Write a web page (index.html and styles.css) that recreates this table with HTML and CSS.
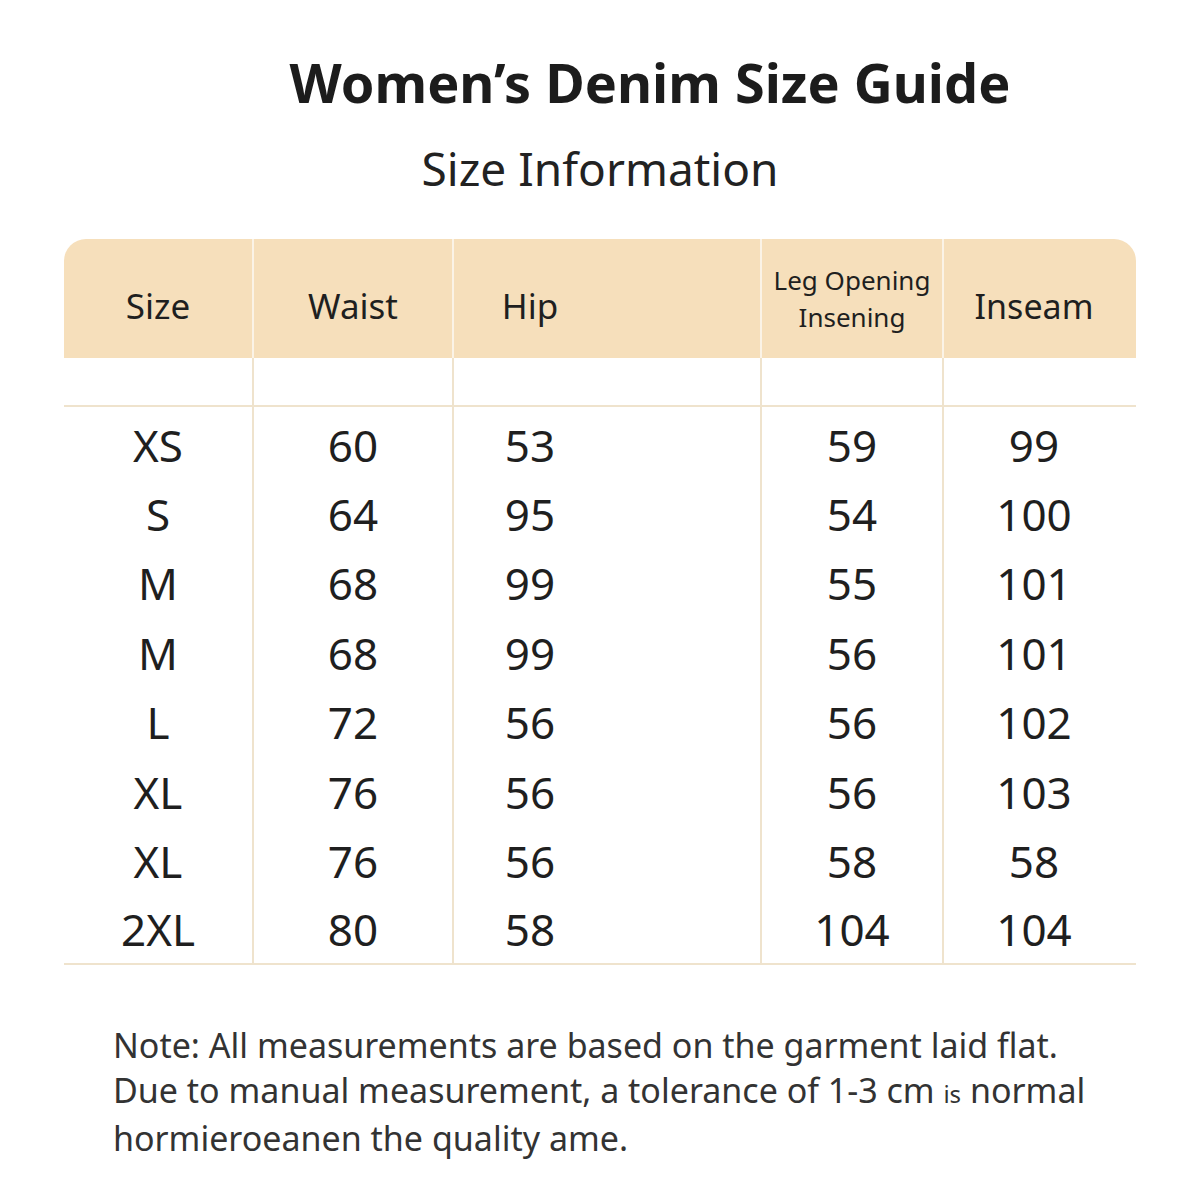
FILE: index.html
```html
<!DOCTYPE html>
<html lang="en">
<head>
<meta charset="utf-8">
<title>Women's Denim Size Guide</title>
<link rel="stylesheet" href="styles.css">
</head>
<body>
<main class="page">
  <h1 class="title">Women’s Denim Size Guide</h1>
  <h2 class="subtitle">Size Information</h2>
  <table class="sizes">
    <thead>
      <tr>
        <th class="c-size">Size</th>
        <th class="c-waist">Waist</th>
        <th class="c-hip">Hip</th>
        <th class="c-leg"><span class="two-line">Leg Opening<br>Insening</span></th>
        <th class="c-inseam">Inseam</th>
      </tr>
    </thead>
    <tbody>
      <tr class="spacer"><td></td><td></td><td></td><td></td><td></td></tr>
      <tr class="first"><td>XS</td><td>60</td><td class="c-hip">53</td><td>59</td><td class="c-inseam">99</td></tr>
      <tr><td>S</td><td>64</td><td class="c-hip">95</td><td>54</td><td class="c-inseam">100</td></tr>
      <tr><td>M</td><td>68</td><td class="c-hip">99</td><td>55</td><td class="c-inseam">101</td></tr>
      <tr><td>M</td><td>68</td><td class="c-hip">99</td><td>56</td><td class="c-inseam">101</td></tr>
      <tr><td>L</td><td>72</td><td class="c-hip">56</td><td>56</td><td class="c-inseam">102</td></tr>
      <tr><td>XL</td><td>76</td><td class="c-hip">56</td><td>56</td><td class="c-inseam">103</td></tr>
      <tr><td>XL</td><td>76</td><td class="c-hip">56</td><td>58</td><td class="c-inseam">58</td></tr>
      <tr class="last"><td>2XL</td><td>80</td><td class="c-hip">58</td><td>104</td><td class="c-inseam">104</td></tr>
    </tbody>
  </table>
  <p class="note">Note: All measurements are based on the garment laid flat.<br>Due to manual measurement, a tolerance of 1-3 cm <span class="tiny">is</span> normal<br>hormieroeanen the quality ame.</p>
</main>
</body>
</html>
```

FILE: styles.css
```css
html, body {
  margin: 0;
  padding: 0;
  background: #ffffff;
}

body {
  font-family: "Noto Sans", "Open Sans", sans-serif;
  color: #1f1f1f;
}

.page {
  width: 1200px;
  padding-top: 50px;
}

.title {
  margin: 0;
  padding-left: 100px;
  font-size: 54px;
  line-height: 64px;
  font-weight: 700;
  text-align: center;
  color: #1c1c1c;
}

.subtitle {
  margin: 26px 0 0;
  font-size: 46px;
  line-height: 56px;
  font-weight: 400;
  text-align: center;
  color: #222;
}

.sizes {
  margin: 43px 0 0 64px;
  width: 1072px;
  border-collapse: separate;
  border-spacing: 0;
  table-layout: fixed;
}

.sizes th,
.sizes td {
  padding: 0;
  text-align: center;
  vertical-align: middle;
  box-sizing: border-box;
}

.c-size { width: 188px; }
.c-waist { width: 200px; }
.c-hip { width: 308px; }
.c-leg { width: 182px; }
.c-inseam { width: 194px; }

.sizes th {
  height: 119px;
  padding-top: 14px;
  background: #f6dfbb;
  font-size: 35px;
  font-weight: 400;
  color: #1f1f1f;
}

.sizes th.c-inseam {
  font-size: 34px;
}

.sizes th + th {
  border-left: 2px solid #fbf3e6;
}

.sizes th:first-child { border-top-left-radius: 22px; }
.sizes th:last-child { border-top-right-radius: 22px; }

.sizes .c-hip { padding-right: 154px; }
.sizes .c-inseam { padding-right: 12px; }

.two-line {
  display: inline-block;
  font-size: 26px;
  line-height: 37px;
  padding-bottom: 14px;
}

.sizes td {
  height: 69.4px;
  font-size: 44px;
  color: #1f1f1f;
}

.sizes td + td {
  border-left: 2px solid #efe3cd;
}

.sizes .spacer td {
  height: 49px;
  border-bottom: 2px solid #efe3cd;
}

.sizes .first td {
  height: 72.4px;
  padding-top: 3px;
}

.sizes .last td {
  border-bottom: 2px solid #efe3cd;
}

.note {
  margin: 58px 0 0 113px;
  font-size: 34px;
  line-height: 45px;
  color: #333;
  white-space: nowrap;
}

.tiny {
  font-size: 24px;
}
```
